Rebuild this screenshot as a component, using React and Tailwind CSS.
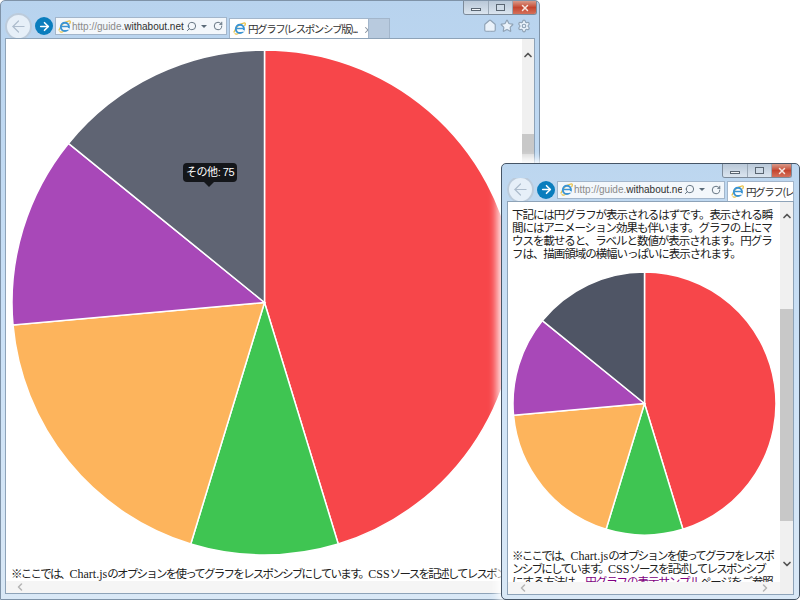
import { ArrowLeft, ArrowRight, ChevronDown, ChevronLeft, ChevronRight, ChevronUp, Home, RotateCw, Search, Settings, Star, X } from 'lucide-react';

const slices = [
  { value: 240, color: '#F7464A' },
  { value: 50, color: '#3FC552' },
  { value: 100, color: '#FDB45C' },
  { value: 65, color: '#A848B8' },
  { value: 75, color: '#5F6473' },
];

function Pie({ size, last = '#5F6473' }) {
  const total = slices.reduce((sum, s) => sum + s.value, 0);
  const r = size / 2 - 1;
  const c = size / 2;
  let angle = 0;
  return (
    <svg width={size} height={size} viewBox={`0 0 ${size} ${size}`} className="block">
      {slices.map((s, i) => {
        const start = angle;
        angle += (s.value / total) * Math.PI * 2;
        const x1 = c + r * Math.sin(start);
        const y1 = c - r * Math.cos(start);
        const x2 = c + r * Math.sin(angle);
        const y2 = c - r * Math.cos(angle);
        const large = angle - start > Math.PI ? 1 : 0;
        return (
          <path
            key={i}
            d={`M${c} ${c}L${x1} ${y1}A${r} ${r} 0 ${large} 1 ${x2} ${y2}Z`}
            fill={i === 4 ? last : s.color}
            stroke="#fff"
            strokeWidth="1.5"
          />
        );
      })}
    </svg>
  );
}

function IeLogo() {
  return (
    <svg width="13" height="13" viewBox="0 0 16 16" className="shrink-0">
      <path d="M1 13C3 7 8 2 14 1c2 0 1 3 0 4" fill="none" stroke="#e8c34a" strokeWidth="1.6" />
      <path d="M2 14c2 2 5 0 6-1" fill="none" stroke="#e8c34a" strokeWidth="1.4" />
      <circle cx="8.5" cy="8.5" r="5" fill="none" stroke="#3b94d3" strokeWidth="2.4" />
      <path d="M4 8h9" stroke="#3b94d3" strokeWidth="1.8" />
      <path d="M10 11h4" stroke="#fff" strokeWidth="2" />
    </svg>
  );
}

function WindowButtons({ className }) {
  return (
    <div className={`flex h-[14px] overflow-hidden rounded-b-[3px] border border-t-0 border-[#7c8a99] ${className}`}>
      <div className="flex w-[25px] items-end justify-center border-r border-[#9aa8b6] bg-gradient-to-b from-[#b9c8d8] to-[#dbe5ef] pb-[3px]">
        <div className="h-[3px] w-[10px] border border-[#5a6672] bg-[#f2f5f8]" />
      </div>
      <div className="flex w-[24px] items-center justify-center border-r border-[#9aa8b6] bg-gradient-to-b from-[#b9c8d8] to-[#dbe5ef]">
        <div className="h-[7px] w-[9px] border border-[#5a6672] bg-[#cfdbe7]" />
      </div>
      <div className="flex flex-1 items-center justify-center bg-gradient-to-b from-[#d89a8a] via-[#c4452f] to-[#d4705a]">
        <X size={10} strokeWidth={3.5} className="text-[#f5e6e0]" />
      </div>
    </div>
  );
}

function NavButtons() {
  return (
    <div className="flex shrink-0 items-center">
      <div className="flex h-[27px] w-[27px] shrink-0 items-center justify-center rounded-full border-2 border-[#bccbdb] bg-[#e6eff8]">
        <ArrowLeft size={19} strokeWidth={1.5} className="text-[#adbccd]" />
      </div>
      <div className="ml-[3px] flex h-[18px] w-[18px] items-center justify-center rounded-full bg-[#0a7dbd]">
        <ArrowRight size={13} strokeWidth={3} className="text-white" />
      </div>
    </div>
  );
}

function AddressBar({ url, width }) {
  return (
    <div className={`ml-[2px] flex h-[18px] shrink-0 items-center border border-[#a3b6cb] bg-[#f3f7fb] pl-[2px] pr-[3px] font-['Liberation_Sans',sans-serif] text-[10px] ${width}`}>
      <IeLogo />
      <span className="ml-[1px] min-w-0 flex-1 overflow-hidden whitespace-nowrap text-[#8a8a8a]">
        http://guide.<span className="text-[#303030]">withabout.net</span>{url}
      </span>
      <Search size={11} strokeWidth={2} className="ml-[2px] shrink-0 -scale-x-100 text-[#5a6a78]" />
      <div className="ml-[4px] h-0 w-0 shrink-0 border-x-[3px] border-t-[3px] border-x-transparent border-t-[#5a6a78]" />
      <RotateCw size={10} strokeWidth={2.2} className="ml-[6px] shrink-0 text-[#5a6a78]" />
    </div>
  );
}

function Tab({ width, children }) {
  return (
    <div className={`flex h-[20px] items-center self-end overflow-hidden border border-b-0 border-[#a3b6cb] bg-white pl-[3px] font-['Noto_Sans_CJK_JP',sans-serif] text-[10.5px] tracking-[-1.4px] text-[#303030] ${width}`}>
      <IeLogo />
      <span className="ml-[2px] whitespace-nowrap">{children}</span>
    </div>
  );
}

const bodyFont = "font-['Liberation_Serif','Noto_Sans_CJK_JP',serif] text-[11.5px] leading-[13px] tracking-[-1.05px] text-[#202020]";
const tightFont = "font-['Liberation_Serif','Noto_Sans_CJK_JP',serif] text-[11.5px] leading-[13px] tracking-[-1.75px] text-[#202020]";
const latin = 'text-[12px] tracking-normal';

export default function App() {
  return (
    <div className="relative h-[600px] w-[800px] overflow-hidden bg-white">
      {/* large window */}
      <div className="absolute left-0 top-0 flex h-[600px] w-[540px] flex-col rounded-t-[5px] border border-[#7f93a8] bg-gradient-to-b from-[#b8d3ee] via-[#c9e0f6] to-[#d9e8f6] px-[4px] pb-[5px]">
        <div className="flex h-[13px] justify-end">
          <WindowButtons className="-mr-[2px] w-[74px]" />
        </div>
        <div className="flex h-[24px] items-center">
          <NavButtons />
          <AddressBar width="w-[172px]" url="/r" />
          <Tab width="ml-[2px] w-[140px]">
            円グラフ(レスポンシブ版)...
            <X size={10} strokeWidth={2.5} className="ml-[6px] inline text-[#8c96a2]" />
          </Tab>
          <div className="h-[20px] w-[21px] self-end border-t border-r border-[#a3b6cb] bg-[#b8cade]" />
          <div className="ml-auto mr-[4px] flex items-center gap-[3px]">
            <Home size={14} strokeWidth={2} className="fill-[#eaf2fa] text-[#90a3b6]" />
            <Star size={14} strokeWidth={2} className="fill-[#eaf2fa] text-[#90a3b6]" />
            <Settings size={14} strokeWidth={2} className="fill-[#eaf2fa] text-[#90a3b6]" />
          </div>
        </div>
        <div className="relative flex min-h-0 flex-1 border border-[#8ea3b8] bg-white">
          <div className="flex min-w-0 flex-1 flex-col overflow-hidden pt-[10px]">
            <div className="relative ml-[5px] shrink-0">
              <Pie size={507} />
              <div className="absolute left-[172px] top-[114px] rounded-[4px] bg-[#14161a] px-[3px] py-[2px] font-['Liberation_Sans','Noto_Sans_CJK_JP',sans-serif] text-[11px] leading-[15px] tracking-[-0.45px] whitespace-nowrap text-white">
                その他: 75
                <div className="absolute left-[21px] top-full h-0 w-0 border-x-[5px] border-t-[5px] border-x-transparent border-t-[#14161a]" />
              </div>
            </div>
            <div className={`mt-[12px] whitespace-nowrap pl-[5px] ${tightFont}`}>
              ※ここでは、<span className={latin}>Chart.js</span>のオプションを使ってグラフをレスポンシブにしています。<span className={latin}>CSS</span>ソースを記述してレスポンシブ
            </div>
            <div className="mt-auto flex h-[12px] shrink-0 items-center justify-between bg-[#f5f5f5] pl-[8px]">
              <ChevronLeft size={12} strokeWidth={3} className="text-[#b5b5b5]" />
            </div>
          </div>
          <div className="flex h-full w-[12px] shrink-0 flex-col bg-[#f0f0f0]">
            <div className="flex h-[22px] items-center justify-center pt-[9px]">
              <ChevronUp size={12} strokeWidth={3.5} className="text-[#555]" />
            </div>
            <div className="mt-[73px] h-[20px] bg-[#c8c8c8]" />
            <div className="h-[10px] bg-gradient-to-b from-[#dcdcdc] to-[#f0f0f0]" />
          </div>
        </div>
      </div>

      {/* small window */}
      <div className="absolute left-[501px] top-[163px] flex h-[437px] w-[299px] flex-col rounded-[5px] border border-[#465566] bg-gradient-to-b from-[#bcd6ef] via-[#cfe3f7] to-[#d9e8f6] px-[5px] pb-[4px] shadow-[0_0_8px_4px_rgba(255,255,255,0.9)]">
        <div className="flex h-[14px] justify-end">
          <WindowButtons className="mr-[2px] w-[70px]" />
        </div>
        <div className="flex h-[23px] items-center overflow-hidden">
          <NavButtons />
          <AddressBar width="w-[168px]" url="" />
          <Tab width="ml-[2px] flex-1">円グラフ(レスポンシブ版)</Tab>
        </div>
        <div className="flex min-h-0 flex-1 border border-[#8ea3b8] bg-white">
          <div className="flex min-w-0 flex-1 flex-col">
            <div className="flex min-h-0 flex-1 flex-col overflow-hidden pl-[4px] pt-[7px]">
              <p className={`w-[266px] shrink-0 ${bodyFont}`}>
                下記には円グラフが表示されるはずです。表示される瞬間にはアニメーション効果も伴います。グラフの上にマウスを載せると、ラベルと数値が表示されます。円グラフは、描画領域の横幅いっぱいに表示されます。
              </p>
              <div className="mt-[10px] shrink-0">
                <Pie size={265} last="#4F5565" />
              </div>
              <div className="mt-[14px] w-[270px] shrink-0 whitespace-nowrap">
                <p className={tightFont}>
                  ※ここでは、<span className={latin}>Chart.js</span>のオプションを使ってグラフをレスポ
                </p>
                <p className={tightFont}>
                  ンシブにしています。<span className={latin}>CSS</span>ソースを記述してレスポンシブ
                </p>
                <p className={bodyFont}>
                  にする方法は、<span className="text-[#800080]">円グラフの表示サンプル</span>ページをご参照
                </p>
              </div>
            </div>
            <div className="flex h-[12px] shrink-0 items-center justify-between bg-[#f5f5f5] pl-[9px] pr-[9px]">
              <ChevronLeft size={12} strokeWidth={3} className="text-[#b5b5b5]" />
              <ChevronRight size={12} strokeWidth={3} className="text-[#b5b5b5]" />
            </div>
          </div>
          <div className="flex w-[13px] shrink-0 flex-col bg-[#f0f0f0]">
            <div className="flex h-[22px] items-center justify-center pt-[6px]">
              <ChevronUp size={12} strokeWidth={3.5} className="text-[#555]" />
            </div>
            <div className="mt-[85px] h-[212px] bg-[#c8c8c8]" />
            <div className="mt-[37px] flex justify-center">
              <ChevronDown size={12} strokeWidth={3.5} className="text-[#555]" />
            </div>
          </div>
        </div>
      </div>
    </div>
  );
}
